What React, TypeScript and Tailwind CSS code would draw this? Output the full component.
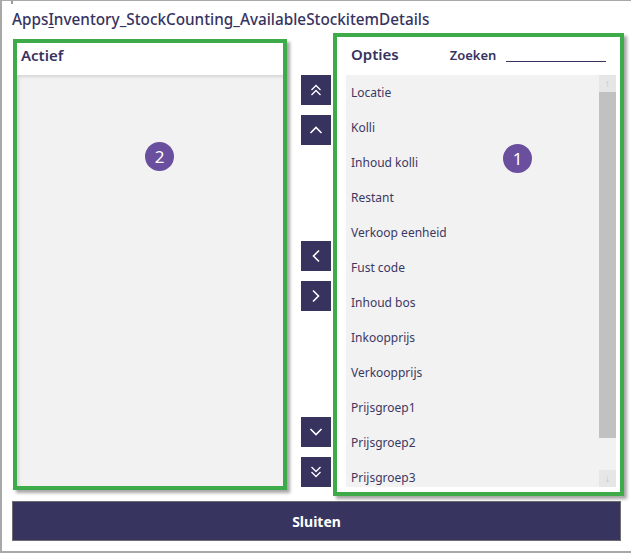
import React from 'react';

const options = [
  'Locatie',
  'Kolli',
  'Inhoud kolli',
  'Restant',
  'Verkoop eenheid',
  'Fust code',
  'Inhoud bos',
  'Inkoopprijs',
  'Verkoopprijs',
  'Prijsgroep1',
  'Prijsgroep2',
  'Prijsgroep3',
];

const Chevron = ({ dir, double }: { dir: 'up' | 'down' | 'left' | 'right'; double?: boolean }) => {
  const rot = { up: 0, right: 90, down: 180, left: 270 }[dir];
  return (
    <svg width="16" height="16" viewBox="0 0 16 16" style={{ transform: `rotate(${rot}deg)` }}>
      {double ? (
        <>
          <path d="M3.5 8 L8 3.5 L12.5 8" fill="none" stroke="white" strokeWidth="1.3" />
          <path d="M3.5 13 L8 8.5 L12.5 13" fill="none" stroke="white" strokeWidth="1.3" />
        </>
      ) : (
        <path d="M2.5 11 L8 5.5 L13.5 11" fill="none" stroke="white" strokeWidth="1.6" />
      )}
    </svg>
  );
};

const MoveButton = ({ dir, double, className }: { dir: 'up' | 'down' | 'left' | 'right'; double?: boolean; className?: string }) => (
  <button className={`w-[30px] h-[30px] bg-[#37335f] flex items-center justify-center ${className ?? ''}`}>
    <Chevron dir={dir} double={double} />
  </button>
);

const Badge = ({ n, className }: { n: number; className: string }) => (
  <div
    className={`absolute w-[29px] h-[29px] rounded-full bg-[#6a4f9e] text-white flex items-center justify-center text-[17px] ${className}`}
  >
    {n}
  </div>
);

export default function App() {
  return (
    <div
      className="relative w-[631px] h-[553px] bg-white border-l-2 border-t border-b-2 border-[#a8a8a8] text-[#37335f]"
      style={{ fontFamily: '"Noto Sans", "Open Sans", sans-serif' }}
    >
      <div className="absolute left-[9px] top-0 w-[2px] h-[3px] bg-[#9a9a9a]" />
      <div className="pl-[10px] pt-[7px] h-[32px] text-[15.3px] leading-[22px] font-medium">
        Apps<span className="underline underline-offset-2">I</span>nventory_StockCounting_AvailableStockitemDetails
      </div>

      <div className="flex items-start">
        {/* Actief panel */}
        <div className="relative ml-[11px] mt-[6px] w-[274px] h-[451px] border-[4px] border-[#3dab4a] shadow-[3px_3px_3px_rgba(0,0,0,0.35)] flex flex-col">
          <div className="h-[32px] bg-white pl-[4px] pt-[1px] text-[15px] font-semibold">Actief</div>
          <div className="flex-1 bg-[#f2f2f2] shadow-[inset_2px_2px_3px_rgba(0,0,0,0.12)]" />
          <Badge n={2} className="left-[128px] top-[99px]" />
        </div>

        {/* move buttons */}
        <div className="ml-[14px] pt-[42px] flex flex-col">
          <MoveButton dir="up" double />
          <MoveButton dir="up" className="mt-[10px]" />
          <MoveButton dir="left" className="mt-[96px]" />
          <MoveButton dir="right" className="mt-[10px]" />
          <MoveButton dir="down" className="mt-[106px]" />
          <MoveButton dir="down" double className="mt-[10px]" />
        </div>

        {/* Opties panel */}
        <div className="relative ml-[2px] w-[291px] h-[463px] border-[4px] border-[#3dab4a] shadow-[3px_3px_3px_rgba(0,0,0,0.35)] bg-white flex flex-col pl-[9px] pr-[4px] pb-[5px]">
          <div className="h-[38px] flex items-center pb-[4px]">
            <span className="ml-[5px] text-[15px] font-semibold">Opties</span>
            <span className="ml-[51px] mt-[3px] text-[13px] font-semibold">Zoeken</span>
            <div className="ml-[10px] w-[100px] h-[16px] border-b border-[#37335f]" />
          </div>
          <div className="flex-1 bg-[#f2f2f2] flex overflow-hidden">
            <div className="flex-1 flex flex-col">
              {options.map((o) => (
                <div key={o} className="h-[35px] shrink-0 flex items-center pl-[5px] text-[12px] text-[#3c3863]">
                  {o}
                </div>
              ))}
            </div>
            <div className="w-[17px] flex flex-col">
              <div className="h-[17px] bg-[#e6e6e6] flex items-center justify-center text-[#bdbdbd] text-[10px]">↑</div>
              <div className="h-[346px] bg-[#c1c1c1]" />
              <div className="flex-1" />
              <div className="h-[17px] bg-[#e6e6e6] flex items-center justify-center text-[#bdbdbd] text-[10px]">↓</div>
            </div>
          </div>
          <Badge n={1} className="left-[166px] top-[107px]" />
        </div>
      </div>

      <button className="ml-[10px] mt-[5px] w-[609px] h-[40px] bg-[#37345f] border border-[#6e6e6e] text-white text-[14px] font-bold">
        Sluiten
      </button>
    </div>
  );
}
